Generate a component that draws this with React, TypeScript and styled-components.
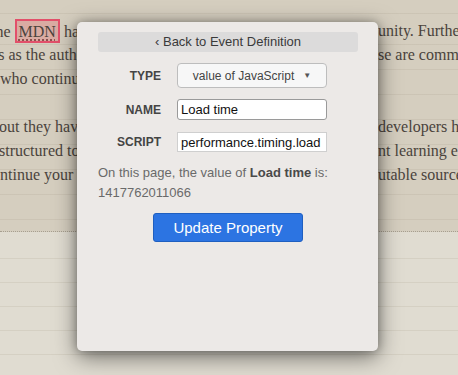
import React from 'react';
import styled, { createGlobalStyle } from 'styled-components';

const GlobalStyle = createGlobalStyle`
    html, body {
        margin: 0;
        padding: 0;
        background: #e0dcd1;
    }
`;

const lines = [
    { left: 'the ', mark: 'MDN', leftRest: ' has become', shift: -9, right: 'unity. Furthermore,' },
    { left: 'sites as the authors', shift: -24, right: 'se are commonly' },
    { left: 'who continue', shift: 0, right: '' },
    { left: '', shift: 0, right: '' },
    { left: 'about they have', shift: -16, right: 'developers have' },
    { left: 'structured to', shift: -1, right: 'nt learning experiences' },
    { left: 'continue your', shift: -15, right: 'utable sources' }
];

const Page = styled.div`
    position: relative;
    width: 458px;
    height: 375px;
    overflow: hidden;
    font-family: 'Liberation Serif', Georgia, serif;
`;

const Article = styled.div`
    height: 212px;
    padding-top: 19px;
    background-color: #d5cebf;
    background-image: repeating-linear-gradient(
        to bottom,
        transparent 0,
        transparent 24px,
        rgba(160, 150, 130, 0.18) 24px,
        rgba(160, 150, 130, 0.18) 25px
    );
    background-position: 0 20px;
    border-bottom: 1px dotted #a79f90;
`;

const Lower = styled.div`
    height: 143px;
    background-color: #e0dcd1;
    background-image: repeating-linear-gradient(
        to bottom,
        transparent 0,
        transparent 23px,
        rgba(170, 160, 140, 0.2) 23px,
        rgba(170, 160, 140, 0.2) 24px
    );
    background-position: 0 3px;
`;

const Line = styled.div`
    display: grid;
    grid-template-columns: 378px 1fr;
    height: 24px;
    line-height: 24px;
    font-size: 16px;
    color: #4a433c;
    white-space: nowrap;
`;

const LeftText = styled.div`
    overflow: hidden;
`;

const Words = styled.span<{ $shift: number }>`
    display: inline-block;
    margin-left: ${p => p.$shift}px;
`;

const RightText = styled.div`
    overflow: hidden;
`;

const Mark = styled.span`
    display: inline-block;
    line-height: 19px;
    padding: 1px 2px 0;
    border: 2px solid #e2506a;
    background: #d9aba2;
    text-decoration: underline dotted #7a3a3a;
    text-underline-offset: 3px;
`;

const Popup = styled.div`
    position: absolute;
    left: 77px;
    top: 22px;
    width: 301px;
    height: 329px;
    box-sizing: border-box;
    padding: 10px 20px 0 21px;
    background: #ece9e7;
    border-radius: 5px;
    box-shadow: 0 6px 22px rgba(0, 0, 0, 0.5), 0 0 8px rgba(0, 0, 0, 0.25);
    font-family: 'Liberation Sans', Arial, sans-serif;
    display: flex;
    flex-direction: column;
`;

const BackBar = styled.div`
    height: 20px;
    line-height: 20px;
    text-align: center;
    background: #dcdbdb;
    border-radius: 3px;
    font-size: 13px;
    color: #3a3a3a;
`;

const Form = styled.div`
    display: grid;
    grid-template-columns: 63px 150px;
    column-gap: 16px;
    align-items: center;
    margin-top: 11px;
`;

const Label = styled.div<{ $gap: number }>`
    text-align: right;
    font-size: 12px;
    font-weight: bold;
    color: #444;
    margin-top: ${p => p.$gap}px;
`;

const Field = styled.div<{ $gap: number }>`
    margin-top: ${p => p.$gap}px;
`;

const Select = styled.div`
    box-sizing: border-box;
    height: 25px;
    border: 1px solid #bdbdbd;
    border-radius: 4px;
    background: #f7f7f7;
    display: flex;
    align-items: center;
    justify-content: center;
    gap: 9px;
    font-size: 12px;
    color: #444;
`;

const Arrow = styled.span`
    font-size: 8px;
    color: #555;
`;

const Input = styled.input<{ $rounded?: boolean }>`
    display: block;
    box-sizing: border-box;
    width: 150px;
    height: ${p => (p.$rounded ? 21 : 20)}px;
    padding: 0 3px;
    border: 1px solid ${p => (p.$rounded ? '#9a9a9a' : '#cfcfcf')};
    border-radius: ${p => (p.$rounded ? 3 : 0)}px;
    background: #fff;
    font-family: 'Liberation Sans', Arial, sans-serif;
    font-size: 13px;
    color: #111;
    outline: none;
`;

const Info = styled.div`
    margin-top: 11px;
    font-size: 13px;
    line-height: 20px;
    color: #6a6a6a;

    b {
        color: #4a4a4a;
    }
`;

const Button = styled.button`
    align-self: center;
    margin-top: 10px;
    width: 150px;
    height: 29px;
    border: 1px solid #1f5fc0;
    border-radius: 3px;
    background: #2c74e2;
    color: #fff;
    font-family: 'Liberation Sans', Arial, sans-serif;
    font-size: 15px;
    padding: 0;
`;

export default function App() {
    return (
        <Page>
            <GlobalStyle />
            <Article>
                {lines.map((l, i) => (
                    <Line key={i}>
                        <LeftText>
                            <Words $shift={l.shift}>
                                {l.left}
                                {l.mark && <Mark>{l.mark}</Mark>}
                                {l.leftRest}
                            </Words>
                        </LeftText>
                        <RightText>{l.right}</RightText>
                    </Line>
                ))}
            </Article>
            <Lower />
            <Popup>
                <BackBar>‹ Back to Event Definition</BackBar>
                <Form>
                    <Label $gap={0}>TYPE</Label>
                    <Field $gap={0}>
                        <Select>
                            <span>value of JavaScript</span>
                            <Arrow>▼</Arrow>
                        </Select>
                    </Field>
                    <Label $gap={11}>NAME</Label>
                    <Field $gap={11}>
                        <Input $rounded defaultValue="Load time" />
                    </Field>
                    <Label $gap={12}>SCRIPT</Label>
                    <Field $gap={12}>
                        <Input defaultValue="performance.timing.load" />
                    </Field>
                </Form>
                <Info>
                    On this page, the value of <b>Load time</b> is:
                    <br />
                    1417762011066
                </Info>
                <Button>Update Property</Button>
            </Popup>
        </Page>
    );
}
